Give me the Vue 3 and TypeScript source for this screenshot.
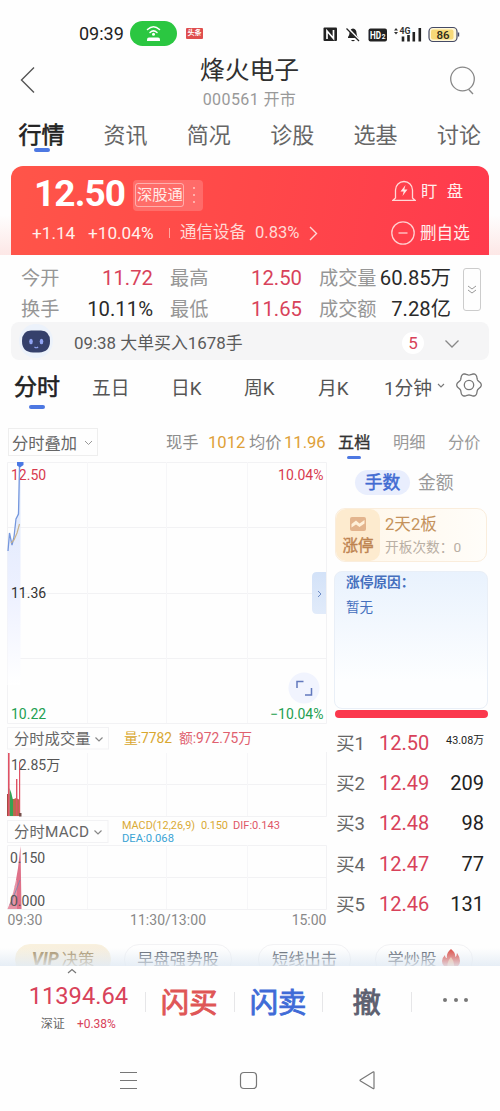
<script setup lang="ts">
interface Quote { label: string; value: string; up?: boolean }
interface Order { label: string; price: string; qty: string; small?: boolean }

const tabs: string[] = ['行情', '资讯', '简况', '诊股', '选基', '讨论']
const quotes: Quote[] = [
  { label: '今开', value: '11.72', up: true },
  { label: '最高', value: '12.50', up: true },
  { label: '成交量', value: '60.85万' },
  { label: '换手', value: '10.11%' },
  { label: '最低', value: '11.65', up: true },
  { label: '成交额', value: '7.28亿' },
]
const periods: string[] = ['分时', '五日', '日K', '周K', '月K', '1分钟']
const orders: Order[] = [
  { label: '买1', price: '12.50', qty: '43.08万', small: true },
  { label: '买2', price: '12.49', qty: '209' },
  { label: '买3', price: '12.48', qty: '98' },
  { label: '买4', price: '12.47', qty: '77' },
  { label: '买5', price: '12.46', qty: '131' },
]

// Six-lobed outline of the settings gear, centred on the origin.
const gearPath: string = 'M' + Array.from({ length: 72 }, (_, i) => {
  const a = (i / 72) * Math.PI * 2
  const r = 11.1 + 1.2 * Math.cos(6 * a)
  return `${(r * Math.cos(a)).toFixed(2)} ${(r * Math.sin(a)).toFixed(2)}`
}).join('L') + 'Z'
</script>

<template>
  <div class="phone">
    <div class="status">
      <span class="clock">09:39</span>
      <svg class="hotspot" width="47" height="25" viewBox="0 0 47 25">
        <rect width="47" height="25" rx="12.5" fill="#2bc741" />
        <g fill="none" stroke="#fff" stroke-width="1.5" stroke-linecap="round">
          <path d="M17.5 8.5Q23.5 3 29.5 8.5M20 11.5Q23.5 8.3 27 11.5" />
        </g>
        <circle cx="23.5" cy="13.3" r="1.5" fill="#fff" />
        <path d="M17 20v-1.5q0-2 2-2h9q2 0 2 2V20z" fill="#fff" />
      </svg>
      <span class="news">头条</span>
      <svg class="radio" width="138" height="22" viewBox="322 22 138 22">
        <rect x="323.5" y="26.500" width="13.500" height="13.500" rx="1" fill="#222" /><path d="M327 38V30l6.500 7.500V29" fill="none" stroke="#fff" stroke-width="1.700" />
        <path d="M348 36q1.500-1.500 1.500-4 0-4 3.500-4.500 3.500.5 3.500 4.500 0 2.500 2 5h-10.500zM351 39h4q-2 2.500-4 0z" fill="#222" /><path d="M347 26.500l12 12.500" stroke="#fff" stroke-width="2.500" /><path d="M346.500 27.500l12.500 12.500" stroke="#222" stroke-width="1.300" />
        <rect x="368.500" y="27.500" width="18.500" height="13" rx="2" fill="#222" /><text x="370" y="38" font-size="10" font-weight="700" fill="#fff" textLength="11" lengthAdjust="spacingAndGlyphs">HD</text><text x="381.800" y="38" font-size="6.500" font-weight="700" fill="#fff">2</text>
        <path d="M394 29.500l2-2.500 2 2.500zM394 31l2 2.500 2-2.500z" fill="#333" /><text x="399.500" y="33" font-size="9.500" font-weight="700" fill="#333" textLength="11" lengthAdjust="spacingAndGlyphs">4G</text>
        <path d="M403 35.500v5M408.500 34v6.500M413.800 31v9.500M419.800 27v13.500" stroke="#222" stroke-width="2.600" />
        <rect x="429" y="26.500" width="28" height="14" rx="4" fill="#fff7d8" stroke="#444a66" stroke-width="1.200" /><rect x="431" y="28.500" width="22.500" height="10" rx="2" fill="#f7d978" /><path d="M458.500 31.500v4" stroke="#444a66" stroke-width="1.400" /><text x="436.500" y="37.700" font-size="11.500" font-weight="500" fill="#2d2a20">86</text>
      </svg>
    </div>

    <header class="head">
      <svg class="back" width="16" height="28" viewBox="0 0 16 28"><path d="M14 1.5L1.5 14 14 26.5" fill="none" stroke="#555" stroke-width="1.4" /></svg>
      <div class="titles"><h1>烽火电子</h1><p>000561 开市</p></div>
      <svg width="28" height="32" viewBox="0 0 28 32"><g fill="none" stroke="#888" stroke-width="1.3"><circle cx="13.5" cy="14" r="11.8" /><path d="M19.5 24.2L24 29" /></g></svg>
    </header>

    <nav class="tabs">
      <span v-for="(t, i) in tabs" :key="t" :class="{ on: i === 0 }">{{ t }}</span>
    </nav>

    <section class="hero-wrap">
      <div class="hero">
        <div class="hero-top">
          <span class="price">12.50</span>
          <span class="tag"><b>深股通</b><i><u></u><u></u><u></u></i></span>
          <span class="act">
            <svg width="24" height="24" viewBox="0 0 24 24"><g fill="none" stroke="#ffd9d8" stroke-width="1.3"><path d="M3.500 19V11a8.500 8.500 0 0 1 17 0V19L23 21.300H1z" /></g><path d="M13.500 6L8.500 12.500h3.200L10.500 17 15.500 10.500h-3.200z" fill="#ffe6e4" /></svg>
            <em class="wide">盯盘</em>
          </span>
        </div>
        <div class="hero-bottom">
          <span>+1.14</span><span>+10.04%</span><i class="bar"></i><span>通信设备</span><span>0.83%</span>
          <svg width="9" height="15" viewBox="0 0 9 15"><path d="M1 1l6.500 6.500L1 14" fill="none" stroke="#ffd9d8" stroke-width="1.400" /></svg>
          <span class="act">
            <svg width="24" height="24" viewBox="0 0 24 24"><g fill="none" stroke="#ffd0d0" stroke-width="1.300"><circle cx="12" cy="12" r="11.200" /><path d="M7.500 12h9" /></g></svg>
            <em>删自选</em>
          </span>
        </div>
      </div>
    </section>

    <section class="quotes">
      <div class="quote-grid">
        <template v-for="q in quotes" :key="q.label">
          <span class="ql">{{ q.label }}</span><span class="qv" :class="{ up: q.up }">{{ q.value }}</span>
        </template>
      </div>
      <div class="more"><svg width="10" height="10" viewBox="0 0 10 10"><path d="M1 1l4 3 4-3M1 5l4 3 4-3" fill="none" stroke="#999" /></svg></div>
    </section>

    <section class="notice">
      <svg width="40" height="38" viewBox="0 0 40 38">
        <circle cx="19" cy="19" r="17" fill="#ecf2fb" />
        <path d="M5 19q0-10 9-10.500h10q9 .5 9 10.500 0 11-11 11.500h-6Q5 30 5 19z" fill="#35406b" />
        <ellipse cx="14" cy="19.500" rx="1.800" ry="2.700" fill="#91a4f2" /><ellipse cx="24.500" cy="19.500" rx="1.800" ry="2.700" fill="#91a4f2" />
        <path d="M17.500 25q1.800 1.500 3.600 0" fill="none" stroke="#91a4f2" stroke-width="1.200" />
      </svg>
      <span class="msg">09:38 大单买入1678手</span>
      <span class="count">5</span>
      <svg class="open" width="16" height="10" viewBox="0 0 16 10"><path d="M1.500 1.500L8 8l6.500-6.500" fill="none" stroke="#888" stroke-width="1.300" /></svg>
    </section>

    <nav class="periods">
      <span v-for="(p, i) in periods" :key="p" :class="{ on: i === 0 }">{{ p }}</span>
      <svg class="tiny" width="8" height="6" viewBox="0 0 8 6"><path d="M1 1l3 3 3-3" fill="none" stroke="#777" stroke-width="1.100" /></svg>
      <svg class="gear" width="28" height="28" viewBox="-14 -14 28 28"><g fill="none" stroke="#777" stroke-width="1.300"><path :d="gearPath" /><circle r="4.700" /></g></svg>
    </nav>

    <main class="main">
      <div class="left">
        <div class="chart-head">
          <span class="select">分时叠加<svg width="9" height="6" viewBox="0 0 9 6"><path d="M1 1l3.500 3.500L8 1" fill="none" stroke="#999" /></svg></span>
          <span class="k">现手</span><span class="o">1012</span><span class="k">均价</span><span class="o">11.96</span>
        </div>
        <svg class="charts" width="328" height="470" viewBox="0 460 328 470">
          <defs><linearGradient id="area" x1="0" y1="0" x2="0" y2="1"><stop offset="0" stop-color="#dbe7fb" /><stop offset=".6" stop-color="#eef1ff" /><stop offset="1" stop-color="#fff" /></linearGradient>
          <linearGradient id="knob" x1="0" y1="0" x2="0" y2="1"><stop offset="0" stop-color="#d3e2f8" /><stop offset="1" stop-color="#e1ebfa" /></linearGradient></defs>
          <g fill="none" stroke="#f2f2f4">
            <path d="M7.500 462.500H326.500V723.500H7.500zM7.500 527.500H326M7.500 593.500H326M7.500 658.500H326" />
            <path d="M7.500 752V816.500H326.500V752M7.500 784.500H326M7.500 845.500H326.500V909.500H7.500zM7.500 877.500H326" />
            <path d="M87.500 462V723M166.500 462V723M247.500 462V723M87.500 753V816M166.500 753V816M247.500 753V816M87.500 845V909M166.500 845V909M247.500 845V909" stroke="#f6f6f8" />
            <rect x="7.500" y="727.500" width="101" height="21.500" /><rect x="7.500" y="820.500" width="100.500" height="22" />
          </g>
          <path d="M7.500 551L9 533 12 545 15 536 17 517 19 505V464H20.500V685H7.500z" fill="url(#area)" />
          <g class="axis">
            <text x="11" y="479.500" fill="#d83a4e">12.50</text><text x="323.500" y="479.500" text-anchor="end" fill="#d83a4e">10.04%</text>
            <text x="11" y="598" fill="#333">11.36</text>
            <text x="11" y="719" fill="#23a052">10.22</text><text x="323.500" y="719" text-anchor="end" fill="#23a052">−10.04%</text>
          </g>
          <path d="M8 551L9.500 533 12 545 14 537 16 519 18.500 514 19.500 466" fill="none" stroke="#7597dd" stroke-width="1.300" />
          <path d="M11 543L14 540 17 533 19.500 524" fill="none" stroke="#c9b48b" stroke-width="1.200" />
          <path d="M17 462h6.500v3l-3.500 2.500-3-2z" fill="#4a78e4" />
          <path d="M326 572h-9q-5 0-5 5v32q0 5 5 5h9z" fill="url(#knob)" /><path d="M318 591l3 3-3 3" fill="none" stroke="#6d8bc6" />
          <circle cx="304" cy="688" r="15.500" fill="#f1f4fe" /><path d="M297 688v-6.500h6.500M305 695h6.500v-7" fill="none" stroke="#6278bd" stroke-width="1.500" />

          <g class="sel"><text x="14" y="744">分时成交量</text><text x="14" y="836.500" textLength="75">分时MACD</text></g>
          <path d="M95.500 737.500l3.500 3.500 3.500-3.500M94.500 830.500l3.500 3.500 3.500-3.500" fill="none" stroke="#888" stroke-width="1.200" />
          <g class="vol"><text x="124" y="743" fill="#d9a72f" textLength="48">量:7782</text><text x="179" y="743" fill="#e0606e" textLength="73">额:972.75万</text></g>
          <path d="M7 816V794h2.500v22z" fill="#a54b42" /><path d="M12 816V799h2l2-1 4 2V816z" fill="#bb6a4c" />
          <path d="M9.500 788l1.800 5 1.700 7v16H9.500z" fill="#35a354" />
          <path d="M8 753h1.600V816H8zM16 779h1.400v37H16zM19 762h1.200v54H19z" fill="#df5264" /><path d="M19 813h2.500v3.500H19z" fill="#754f4b" />
          <text class="axis dim" x="11" y="769.500">12.85万</text>
          <g class="macd"><text x="122" y="829" fill="#daaa34" textLength="73" lengthAdjust="spacingAndGlyphs">MACD(12,26,9)</text><text x="201" y="829" fill="#daaa34" textLength="27">0.150</text><text x="233" y="829" fill="#de5667" textLength="47" lengthAdjust="spacingAndGlyphs">DIF:0.143</text><text x="122" y="841.500" fill="#3aa3d4" textLength="52" lengthAdjust="spacingAndGlyphs">DEA:0.068</text></g>
          <path d="M7.500 909Q14 895 18 868L20.500 846L21.500 909z" fill="#df7189" />
          <path d="M8 909V904M10 909V898M12 909V894M14 909V887M16 909V880" stroke="#fff" stroke-width=".7" opacity=".7" />
          <path d="M10 905L15 893 20 880" fill="none" stroke="#7089b4" stroke-width=".8" />
          <g class="axis dim"><text x="10" y="863">0.150</text><text x="10" y="906">0.000</text></g>
          <g class="time"><text x="7.500" y="925">09:30</text><text x="130" y="925" textLength="76">11:30/13:00</text><text x="326.500" y="925" text-anchor="end">15:00</text></g>
        </svg>
      </div>

      <aside class="side">
        <div class="side-tabs"><span class="on">五档</span><span>明细</span><span>分价</span></div>
        <div class="unit"><span class="on">手数</span><span>金额</span></div>
        <div class="limit">
          <div class="limit-l">
            <svg width="16" height="14" viewBox="0 0 16 14"><rect width="16" height="14" rx="2" fill="#e3b48d" /><path d="M1.500 7l4.500-3.500 3.500 3L14.500 3v3.500L9.500 10 6 7.500l-4.500 3z" fill="#fff0d9" /></svg>
            <b>涨停</b>
          </div>
          <div class="limit-r"><strong>2天2板</strong><span>开板次数：0</span></div>
        </div>
        <div class="reason"><b>涨停原因：</b><span>暂无</span></div>
        <div class="ratio"></div>
        <div class="orders">
          <div v-for="o in orders" :key="o.label" class="order"><span>{{ o.label }}</span><em>{{ o.price }}</em><b :class="{ small: o.small }">{{ o.qty }}</b></div>
        </div>
      </aside>
    </main>

    <div class="chips">
      <span class="vip"><i>VIP</i>决策</span><span>早盘强势股</span><span>短线出击</span>
      <span>学炒股<svg width="18" height="19" viewBox="0 0 18 19"><path d="M9 0q5 4 4 8 2-1 2-4 3 4 3 8 0 7-9 7t-9-7q0-3 3-6 0 3 2 3-1-5 4-9z" fill="#dc4b43" /><path d="M9 8q4 5 3 11H6q-2-5 3-11z" fill="#f4ac83" /></svg></span>
      <div class="fade"></div>
    </div>

    <footer class="trade">
      <div class="index">
        <svg width="10" height="6" viewBox="0 0 10 6"><path d="M1 5l4-3.500L9 5" fill="none" stroke="#777" stroke-width="1.200" /></svg>
        <strong>11394.64</strong>
        <p><span>深证</span><em>+0.38%</em></p>
      </div>
      <div class="btn buy">闪买</div><div class="btn sell">闪卖</div><div class="btn cancel">撤</div>
      <div class="btn dots"><i></i><i></i><i></i></div>
    </footer>

    <div class="sysnav">
      <svg width="260" height="20" viewBox="118 1070 260 20"><g fill="none" stroke="#777" stroke-width="1.200"><path d="M120 1072.500h17M120 1080.500h17M120 1088.500h17" /><rect x="240.500" y="1072.500" width="16" height="16" rx="3.500" /><path d="M374 1072.500v15.500q0 1-1 .5L360.500 1081q-1-.6 0-1.200L373 1072q1-.5 1 .5z" /></g></svg>
    </div>
  </div>
</template>

<style>
body { margin: 0; background: #fefefe; }
</style>

<style scoped>
.phone { position: relative; width: 500px; height: 1111px; overflow: hidden; background: #fefefe; font-family: Roboto, "Noto Sans CJK SC", sans-serif; color: #333; display: flex; flex-direction: column; white-space: nowrap; }
.phone * { box-sizing: border-box; }
em, i, u { font-style: normal; text-decoration: none; }
h1, p { margin: 0; }
svg { flex: none; display: block; }
.status { height: 50px; padding: 17px 40px 0 79px; display: flex; align-items: center; }
.clock { width: 51px; font-size: 18px; color: #222; line-height: 30px; }
.hotspot { margin-right: 9px; }
.news { width: 17px; height: 11px; background: #df4e4e; border-radius: 1px; color: #fff; font-size: 7px; line-height: 11px; text-align: center; font-weight: 700; }
.radio { margin-left: auto; }

.head { height: 64px; padding: 0 23px 0 20px; display: flex; justify-content: space-between; }
.back { margin-top: 16px; }
.head > svg:last-child { margin-top: 15px; }
.titles { margin-left: 14px; text-align: center; }
.titles h1 { font-size: 24.800px; font-weight: 400; line-height: 36px; color: #303030; padding-top: 3px; }
.titles p { font-size: 16px; line-height: 22px; color: #999; letter-spacing: .4px; }

.tabs { height: 52px; display: grid; grid-template-columns: repeat(6, 83.400px); }
.tabs span { font-size: 22px; line-height: 43px; color: #666; padding-left: 20px; }
.tabs .on { font-size: 23px; color: #222; padding-left: 18.500px; -webkit-text-stroke: .6px #222; position: relative; }
.tabs .on::after { content: ""; position: absolute; left: 34px; top: 34px; width: 16px; height: 4px; border-radius: 2px; background: #4d78e2; }

.hero-wrap { height: 89px; padding: 0 11px; background: linear-gradient(#fefefe 55%, #fde7e6); }
.hero { height: 89px; border-radius: 12px 12px 0 0; background: linear-gradient(100deg, #ff5549, #ff4849 50%, #ff3a4d); color: #ffd9d5; }
.hero-top { height: 54px; display: flex; align-items: center; padding-left: 23px; }
.price { width: 99px; font-size: 37px; line-height: 54px; padding-top: 2px; font-weight: 700; color: #fff; letter-spacing: -.9px; }
.tag { width: 70px; height: 31px; margin-top: 4px; border-radius: 4px; background: rgba(255,255,255,.18); display: flex; align-items: center; padding-left: 2px; }
.tag b { width: 49px; height: 24px; border: 1px solid rgba(255,255,255,.45); border-radius: 3px; font-size: 15.300px; line-height: 23px; font-weight: 400; padding-left: 1px; color: #ffe9e6; }
.tag i { display: flex; flex-direction: column; gap: 5px; margin-left: 9px; }
.tag u { width: 2px; height: 2px; background: #ffc6c1; border-radius: 1px; }
.act { margin-left: auto; width: 97px; display: flex; align-items: center; color: #ffefec; font-size: 16.300px; }
.hero-top .act { margin-top: -4px; }
.act em { margin-left: 5px; line-height: 24px; }
.act .wide { letter-spacing: 9.500px; padding-top: 2px; }
.hero-bottom { height: 24px; display: grid; grid-template-columns: 56px 81px 11px 75px 54px 82px 97px; align-items: center; padding-left: 21px; font-size: 16.600px; line-height: 26px; }
.hero-bottom > span:nth-child(-n+2) { color: #fff0ec; font-size: 17.200px; }
.hero-bottom > span:nth-child(4) { font-size: 16.500px; }
.hero-bottom > svg { margin-top: 1px; }
.hero-bottom .act { margin: -1px 0 0; font-size: 16.600px; }
.hero-bottom .act em { padding-top: 3px; }
.bar { width: 1px; height: 10px; background: #ffa79f; }

.quotes { height: 67px; padding: 7px 0 0 21px; display: flex; }
.quote-grid { width: 430px; padding-top: 1px; display: grid; grid-template-columns: 38px 94px 55px 94px 75px 74px; grid-template-rows: 31px 31px; }
.ql { font-size: 19.200px; line-height: 31px; color: #969696; }
.ql:nth-child(6n+3), .ql:nth-child(6n+5) { padding-left: 17px; }
.qv { font-size: 20.300px; line-height: 31px; color: #2a2a2a; text-align: right; }
.qv.up { color: #d8425a; }
.more { width: 18px; height: 43px; margin: 6px 0 0 12px; border: 1px solid #ccc; border-radius: 3px; display: grid; place-items: center; }
.notice { height: 38px; margin: 0 11px; border-radius: 8px; background: #f5f5f6; display: flex; align-items: center; padding-left: 6px; }
.msg { margin-left: 17px; padding-top: 4px; width: 328px; font-size: 16.900px; color: #5a5a5a; line-height: 38px; }
.count { width: 22px; height: 22px; margin-top: 4px; border-radius: 50%; background: #fff; color: #d8425a; text-align: center; font-size: 17px; line-height: 22px; margin-right: 20px; }
.open { margin-top: 6px; }

.periods { height: 60px; display: grid; grid-template-columns: 78px 79px 73px 74px 66px 53px 18px 30px; padding-left: 14px; font-size: 18.800px; line-height: 58px; color: #555; }
.periods .on { color: #222; font-size: 23px; line-height: 56px; -webkit-text-stroke: .6px #222; position: relative; }
.periods .on::after { content: ""; position: absolute; left: 15px; top: 45px; width: 16px; height: 4px; border-radius: 2px; background: #4d78e2; }
.tiny { margin-top: 23px; }
.gear { margin-top: 11px; }

.main { height: 510px; display: flex; }
.left { width: 328px; flex: none; padding-top: 8px; }
.chart-head { height: 32px; display: grid; grid-template-columns: 158px 42px 41px 35px 44px; padding-left: 8px; font-size: 16.300px; line-height: 29px; color: #8d8d8d; }
.select { width: 90px; height: 28px; border: 1px solid #eee; display: flex; align-items: center; justify-content: space-between; padding: 2px 4px 0 3px; color: #666; }
.o { color: #dea037; font-size: 16.600px; }
.charts text { font-family: Roboto, "Noto Sans CJK SC", sans-serif; }
.axis, .axis text { font-size: 14px; }
.dim, .dim text { fill: #555; font-size: 14px; }
.sel text { font-size: 15.300px; fill: #666; }
.vol text { font-size: 13.800px; }
.macd text { font-size: 11px; }
.time text { font-size: 14px; fill: #888; }

.side { width: 160px; padding: 10px 0 0 6px; }
.side-tabs { height: 37px; display: grid; grid-template-columns: 55px 55px 40px; padding-left: 4px; font-size: 16.200px; line-height: 25px; color: #999; }
.side-tabs .on { color: #333; -webkit-text-stroke: .35px #333; position: relative; }
.side-tabs .on::after { content: ""; position: absolute; left: 9px; top: 26px; width: 14px; height: 3px; border-radius: 1.500px; background: #4d78e2; }
.unit { height: 41px; display: flex; padding: 3px 0 0 21px; font-size: 17.800px; line-height: 25px; color: #999; }
.unit .on { width: 55px; height: 25px; border-radius: 12.500px; background: #e9eefd; color: #416bd2; -webkit-text-stroke: .5px #416bd2; text-align: center; margin-right: 8px; }
.limit { width: 152px; height: 54px; margin-left: 1px; border: 1px solid #faeddc; border-radius: 10px; background: linear-gradient(90deg, #fff6e8, #fffdf9); display: flex; overflow: hidden; }
.limit-l { width: 44px; background: #fdebcf; border-radius: 10px; display: flex; flex-direction: column; align-items: center; padding-top: 8px; }
.limit-l b { font-size: 15.500px; line-height: 31px; font-weight: 400; color: #bd8350; -webkit-text-stroke: .4px #bd8350; }
.limit-r { padding-left: 5px; display: flex; flex-direction: column; }
.limit-r strong { font-weight: 400; font-size: 16.600px; line-height: 31px; color: #c4925c; }
.limit-r span { font-size: 13.700px; line-height: 15px; color: #b9afa4; }
.reason { width: 154px; height: 138px; margin-top: 9px; border: 1px solid #e9eff7; border-radius: 8px; background: linear-gradient(#e9f2fd, #fdfeff 80%); padding-left: 11px; display: flex; flex-direction: column; color: #456fbd; }
.reason b { font-size: 13.700px; line-height: 21px; font-weight: 700; }
.reason span { font-size: 13.500px; line-height: 29px; }
.ratio { width: 153px; height: 8px; border-radius: 4px; background: #fb384d; margin: 1px 0 5px 1px; }
.order { height: 40.200px; display: grid; grid-template-columns: 43px 50px 55px; padding-left: 2px; line-height: 41px; font-size: 20px; color: #666; }
.order span { font-size: 18.600px; line-height: 42px; }
.order em { color: #d8425a; }
.order b { font-weight: 400; color: #222; text-align: right; }
.order .small { font-size: 10.800px; line-height: 35px; }

.chips { position: relative; height: 36px; overflow: hidden; display: grid; grid-template-columns: 96px 108px 106px 98px; column-gap: 13px; padding: 14px 0 0 15px; font-size: 16.300px; color: #555c68; }
.chips > span { height: 31px; line-height: 29px; border: 1px solid #f2f2f4; border-radius: 15px; text-align: center; }
.chips > span:nth-child(3) { margin-left: 13px; }
.chips > span:nth-child(4) { margin-left: 11px; margin-right: -11px; display: flex; justify-content: center; gap: 6px; }
.chips svg { margin-top: 4px; }
.chips .vip { background: linear-gradient(100deg, #f9f1de, #f7eede); border-color: #f9f1de; color: #a48c61; }
.vip i { font-style: italic; font-weight: 700; font-size: 17.500px; margin-right: 3px; }
.fade { position: absolute; left: 0; right: 0; bottom: 0; height: 18px; background: linear-gradient(rgba(232,240,248,0), rgba(226,235,244,.85)); }

.trade { height: 83px; display: flex; background: #fefefe; }
.index { width: 145px; padding-left: 12px; display: flex; flex-direction: column; align-items: center; }
.index svg { margin: 2px 12px 0 0; }
.index strong { font-size: 23.700px; line-height: 44px; font-weight: 400; color: #d8425a; }
.index p { font-size: 12px; line-height: 13px; display: flex; gap: 12px; color: #666; }
.index em { color: #d8425a; }
.btn { width: 89px; height: 35px; margin-top: 18px; font-size: 28.300px; line-height: 40px; text-align: center; position: relative; -webkit-text-stroke: .9px; }
.btn::before { content: ""; position: absolute; left: 0; top: 8px; height: 20px; width: 1px; background: #e6e6e8; }
.buy { color: #df5656; }
.sell { color: #406bd7; }
.cancel { color: #5d6070; }
.dots { display: flex; justify-content: center; align-items: center; gap: 6.500px; padding-bottom: 3px; }
.dots i { width: 4px; height: 4px; border-radius: 50%; background: #777; }
.sysnav { padding: 21px 0 0 118px; }
</style>
